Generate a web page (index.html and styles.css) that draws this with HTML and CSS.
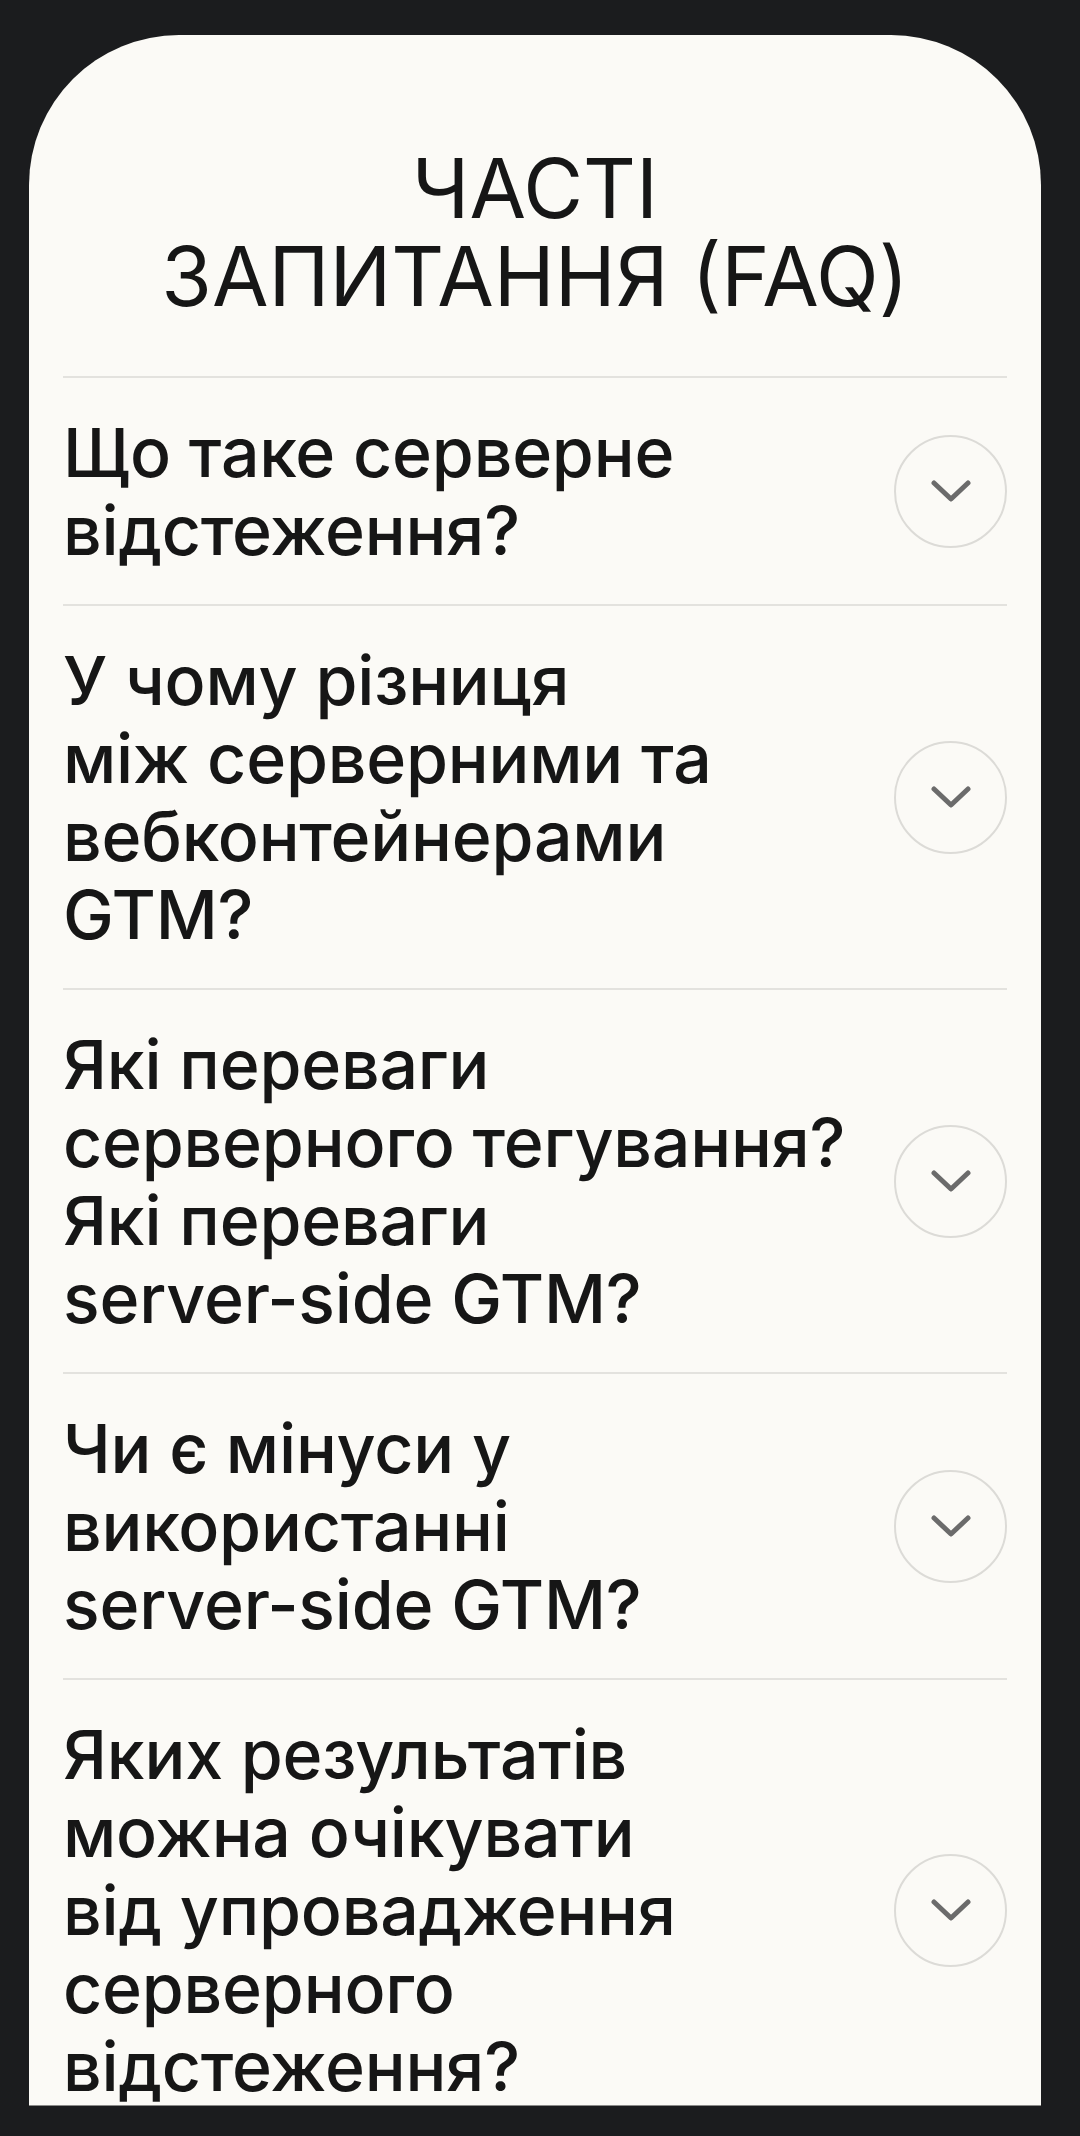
FILE: index.html
```html
<!DOCTYPE html>
<html lang="uk">

<head>
    <meta charset="UTF-8">
    <meta name="viewport" content="width=device-width, initial-scale=1.0">
    <title>Часті запитання (FAQ)</title>
    <link rel="stylesheet" href="styles.css">
</head>

<body>
    <div class="screen">
        <section class="faq">
            <h2 class="faq-title">ЧАСТІ<br>ЗАПИТАННЯ (FAQ)</h2>
            <ul class="faq-list">
                <li class="faq-item">
                    <p class="faq-question">Що таке серверне<br>відстеження?</p>
                    <span class="faq-toggle">
                        <svg viewBox="0 0 40 22" width="40" height="22"><path d="M3 3 L20 19 L37 3"/></svg>
                    </span>
                </li>
                <li class="faq-item">
                    <p class="faq-question">У чому різниця<br>між серверними та<br>вебконтейнерами<br>GTM?</p>
                    <span class="faq-toggle">
                        <svg viewBox="0 0 40 22" width="40" height="22"><path d="M3 3 L20 19 L37 3"/></svg>
                    </span>
                </li>
                <li class="faq-item">
                    <p class="faq-question">Які переваги<br>серверного тегування?<br>Які переваги<br>server-side GTM?</p>
                    <span class="faq-toggle">
                        <svg viewBox="0 0 40 22" width="40" height="22"><path d="M3 3 L20 19 L37 3"/></svg>
                    </span>
                </li>
                <li class="faq-item">
                    <p class="faq-question">Чи є мінуси у<br>використанні<br>server-side GTM?</p>
                    <span class="faq-toggle">
                        <svg viewBox="0 0 40 22" width="40" height="22"><path d="M3 3 L20 19 L37 3"/></svg>
                    </span>
                </li>
                <li class="faq-item">
                    <p class="faq-question">Яких результатів<br>можна очікувати<br>від упровадження<br>серверного<br>відстеження?</p>
                    <span class="faq-toggle">
                        <svg viewBox="0 0 40 22" width="40" height="22"><path d="M3 3 L20 19 L37 3"/></svg>
                    </span>
                </li>
            </ul>
        </section>
    </div>
</body>

</html>
```

FILE: styles.css
```css
* {
    margin: 0;
    padding: 0;
    box-sizing: border-box;
}

body {
    background-color: #1b1c1e;
    font-family: Inter, "Noto Sans", sans-serif;
    color: #161616;
}

.screen {
    padding: 35px 39px 30px 29px;
}

.faq {
    height: 2071px;
    overflow: hidden;
    background-color: #fbfaf6;
    border-radius: 150px 150px 0 0;
    border-bottom: 1px solid #8a8a88;
    padding: 110px 34px 0;
}

.faq-title {
    font-size: 82px;
    font-weight: 400;
    line-height: 88px;
    text-align: center;
    padding-bottom: 55px;
}

.faq-list {
    list-style: none;
}

.faq-item {
    display: flex;
    align-items: center;
    justify-content: space-between;
    gap: 20px;
    padding: 35px 0;
    border-top: 2px solid #e3e2de;
}

.faq-question {
    font-size: 68px;
    font-weight: 500;
    line-height: 78px;
    letter-spacing: -0.2px;
}

.faq-toggle {
    flex: none;
    display: flex;
    align-items: center;
    justify-content: center;
    width: 113px;
    height: 113px;
    border: 2px solid #dcdbd7;
    border-radius: 50%;
}

.faq-toggle svg {
    fill: none;
    stroke: #6b6b6b;
    stroke-width: 5;
    stroke-linecap: round;
    stroke-linejoin: round;
}
```
